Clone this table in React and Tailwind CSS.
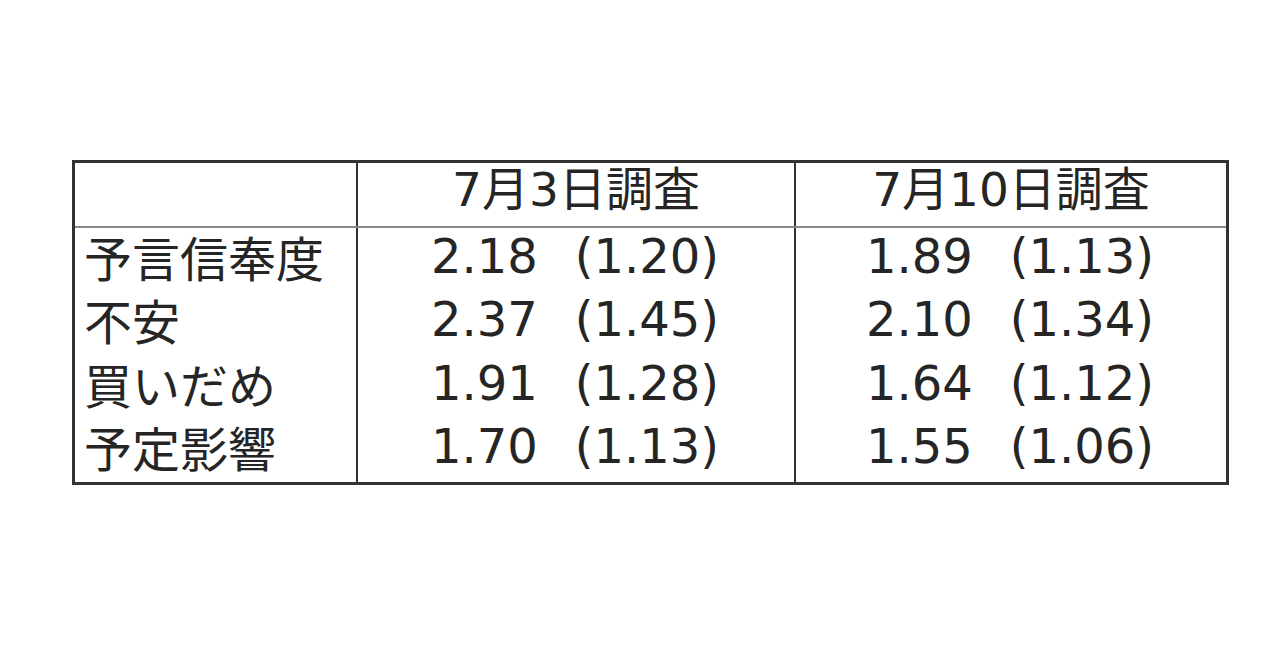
import React from "react";

const rows = [
  ["予言信奉度", "2.18", "(1.20)", "1.89", "(1.13)"],
  ["不安", "2.37", "(1.45)", "2.10", "(1.34)"],
  ["買いだめ", "1.91", "(1.28)", "1.64", "(1.12)"],
  ["予定影響", "1.70", "(1.13)", "1.55", "(1.06)"],
];

const font = { fontFamily: '"DejaVu Sans", "Noto Sans CJK JP", sans-serif' };

function Val({ a, b }) {
  return (
    <div className="flex items-center justify-center gap-[37px] h-full pb-[8px] pr-[2px]">
      <span>{a}</span>
      <span>{b}</span>
    </div>
  );
}

export default function App() {
  return (
    <div className="w-[1280px] h-[670px] bg-white overflow-hidden text-[#252525]" style={font}>
      <div className="ml-[72px] mt-[160px] w-[1157px] border-[3px] border-[#333333]">
        <div className="grid grid-cols-[281px_438px_1fr] border-b-2 border-[#8a8a8a] h-[65px]">
          <div />
          <div className="border-l-2 border-[#333333] flex items-center justify-center text-[47px] leading-none pb-[10px]">
            7月3日調査
          </div>
          <div className="border-l-2 border-[#333333] flex items-center justify-center text-[47px] leading-none pb-[10px]">
            7月10日調査
          </div>
        </div>
        <div className="grid grid-cols-[281px_438px_1fr]">
          <div className="flex flex-col">
            {rows.map((r) => (
              <div key={r[0]} className="h-[63.5px] flex items-center pl-[9px] pb-[8px] text-[48px] leading-none" style={{ fontFamily: '"Noto Sans CJK JP", sans-serif' }}>
                {r[0]}
              </div>
            ))}
          </div>
          <div className="flex flex-col border-l-2 border-[#333333]">
            {rows.map((r) => (
              <div key={r[0]} className="h-[63.5px] text-[48px] leading-none">
                <Val a={r[1]} b={r[2]} />
              </div>
            ))}
          </div>
          <div className="flex flex-col border-l-2 border-[#333333]">
            {rows.map((r) => (
              <div key={r[0]} className="h-[63.5px] text-[48px] leading-none">
                <Val a={r[3]} b={r[4]} />
              </div>
            ))}
          </div>
        </div>
      </div>
    </div>
  );
}
